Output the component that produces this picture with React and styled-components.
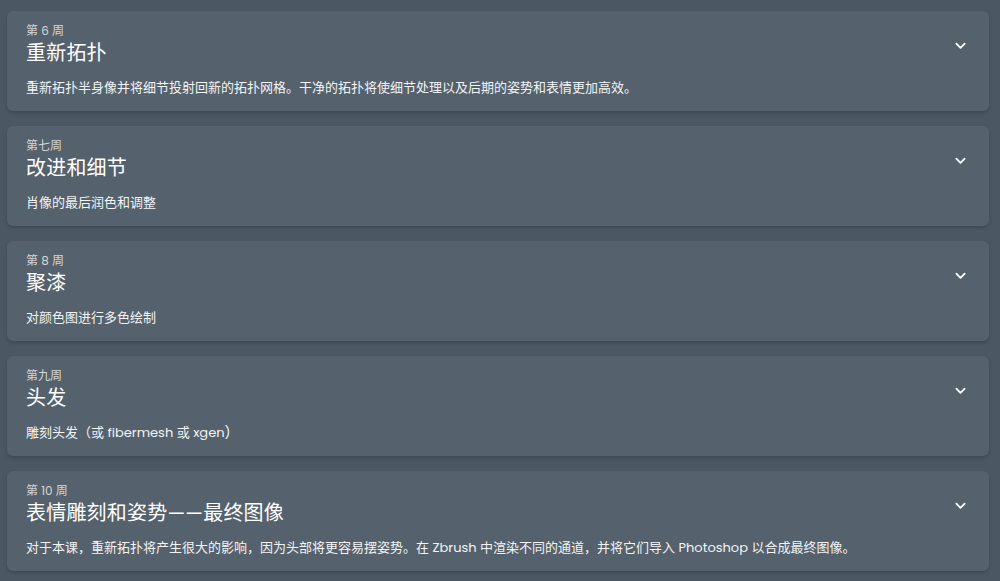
import React from "react";
import styled, { createGlobalStyle } from "styled-components";

const weeks = [
  {
    label: "第 6 周",
    title: "重新拓扑",
    text: "重新拓扑半身像并将细节投射回新的拓扑网格。干净的拓扑将使细节处理以及后期的姿势和表情更加高效。",
  },
  { label: "第七周", title: "改进和细节", text: "肖像的最后润色和调整" },
  { label: "第 8 周", title: "聚漆", text: "对颜色图进行多色绘制" },
  { label: "第九周", title: "头发", text: "雕刻头发（或 fibermesh 或 xgen)" },
  {
    label: "第 10 周",
    title: "表情雕刻和姿势——最终图像",
    text: "对于本课，重新拓扑将产生很大的影响，因为头部将更容易摆姿势。在 Zbrush 中渲染不同的通道，并将它们导入 Photoshop 以合成最终图像。",
  },
];

const App = () => {
  return (
    <>
      <GlobalStyle />
      <Page>
        {weeks.map((w) => (
          <Card key={w.label}>
            <Header>
              <div>
                <Label>{w.label}</Label>
                <Title>{w.title}</Title>
              </div>
              <Chevron viewBox="0 0 12 8">
                <path d="M1.5 1.5 6 6l4.5-4.5" />
              </Chevron>
            </Header>
            <Text>{w.text}</Text>
          </Card>
        ))}
      </Page>
    </>
  );
};

export default App;

const GlobalStyle = createGlobalStyle`
  body {
    margin: 0;
    background: #4b5762;
    font-family: Poppins, Inter, "Noto Sans CJK SC", sans-serif;
  }
`;

const Page = styled.div`
  display: flex;
  flex-direction: column;
  gap: 15px;
  padding: 11px 11px 12px 7px;
  min-height: 581px;
  box-sizing: border-box;
`;

const Card = styled.div`
  background: #55616c;
  border-radius: 6px;
  padding: 11px 19px 13px 19px;
  box-shadow: 0 2px 3px rgba(40, 48, 56, 0.35);
`;

const Header = styled.div`
  display: flex;
  justify-content: space-between;
  align-items: center;
`;

const Label = styled.div`
  font-size: 12px;
  line-height: 18px;
  color: #d3d7db;
`;

const Title = styled.div`
  font-size: 20px;
  line-height: 26px;
  letter-spacing: 0.2px;
  color: #ffffff;
`;

const Chevron = styled.svg`
  width: 11px;
  height: 8px;
  margin: 4px 4px 0 0;
  fill: none;
  stroke: #ffffff;
  stroke-width: 2;
  stroke-linecap: round;
  stroke-linejoin: round;
`;

const Text = styled.div`
  margin-top: 12px;
  font-size: 13px;
  line-height: 20px;
  color: #f2f4f5;
`;
